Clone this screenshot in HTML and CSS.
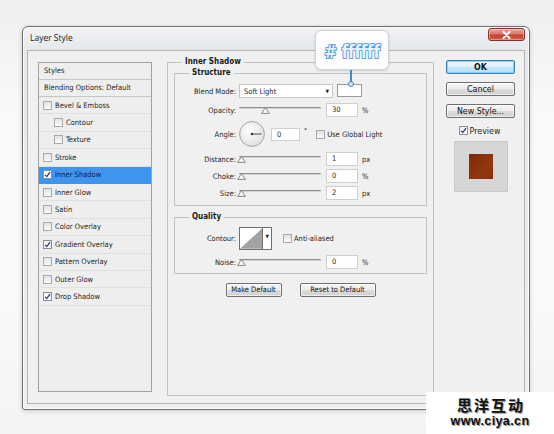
FILE: index.html
```html
<!DOCTYPE html>
<html>
<head>
<meta charset="utf-8">
<title>Layer Style</title>
<link rel="stylesheet" href="styles.css">
</head>
<body>
<div class="dialog">
  <div class="titlebar">
    <span class="title">Layer Style</span>
    <span class="close"><svg width="9" height="8" viewBox="0 0 9 8"><path d="M1.5 1 L7.5 7 M7.5 1 L1.5 7" stroke="#fff" stroke-width="2" stroke-linecap="round"/></svg></span>
  </div>
  <div class="frame">
    <div class="styles">
      <div class="hdr">Styles</div>
      <div class="hdr blend">Blending Options: Default</div>
      <div class="item"><span class="cb"></span>Bevel &amp; Emboss</div>
      <div class="item sub"><span class="cb"></span>Contour</div>
      <div class="item sub"><span class="cb"></span>Texture</div>
      <div class="item"><span class="cb"></span>Stroke</div>
      <div class="item sel"><span class="cb on"><svg width="7" height="7" viewBox="0 0 7 7"><path d="M1 3.8 L2.8 5.6 L6 1.2" fill="none" stroke="#23357a" stroke-width="1.2"/></svg></span>Inner Shadow</div>
      <div class="item"><span class="cb"></span>Inner Glow</div>
      <div class="item"><span class="cb"></span>Satin</div>
      <div class="item"><span class="cb"></span>Color Overlay</div>
      <div class="item"><span class="cb on"><svg width="7" height="7" viewBox="0 0 7 7"><path d="M1 3.8 L2.8 5.6 L6 1.2" fill="none" stroke="#23357a" stroke-width="1.2"/></svg></span>Gradient Overlay</div>
      <div class="item"><span class="cb"></span>Pattern Overlay</div>
      <div class="item"><span class="cb"></span>Outer Glow</div>
      <div class="item"><span class="cb on"><svg width="7" height="7" viewBox="0 0 7 7"><path d="M1 3.8 L2.8 5.6 L6 1.2" fill="none" stroke="#23357a" stroke-width="1.2"/></svg></span>Drop Shadow</div>
    </div>

    <fieldset class="main">
      <legend>Inner Shadow</legend>
      <fieldset class="group structure">
        <legend>Structure</legend>
        <div class="row r-blend">
          <span class="lbl">Blend Mode:</span>
          <div class="select"><span>Soft Light</span><span class="arrow">&#9660;</span></div>
          <div class="swatch"></div>
        </div>
        <div class="row r-opacity">
          <span class="lbl">Opacity:</span>
          <div class="slider"><div class="track"></div><svg class="thumb t-30" width="9" height="7" viewBox="0 0 9 7"><path d="M4.5 0.6 L8.4 6.4 L0.6 6.4 Z" fill="#f7f7f7" stroke="#7a7a7a" stroke-width="0.9"/></svg></div>
          <div class="num">30</div>
          <span class="unit">%</span>
        </div>
        <div class="row r-angle">
          <span class="lbl">Angle:</span>
          <svg class="dial" width="26" height="26" viewBox="0 0 26 26">
            <defs><radialGradient id="dg" cx="0.4" cy="0.35" r="0.7"><stop offset="0" stop-color="#ffffff"/><stop offset="1" stop-color="#dedede"/></radialGradient></defs>
            <circle cx="13" cy="13" r="12.4" fill="url(#dg)" stroke="#9c9c9c" stroke-width="0.9"/>
            <line x1="13" y1="13" x2="22.5" y2="13" stroke="#3a3a3a" stroke-width="0.9"/>
            <circle cx="13" cy="13" r="1.3" fill="#3a3a3a"/>
          </svg>
          <div class="num angle">0</div>
          <span class="deg">&#176;</span>
          <span class="cb cb-q"></span>
          <span class="cbtext">Use Global Light</span>
        </div>
        <div class="row r-dist">
          <span class="lbl">Distance:</span>
          <div class="slider"><div class="track"></div><svg class="thumb t-0" width="9" height="7" viewBox="0 0 9 7"><path d="M4.5 0.6 L8.4 6.4 L0.6 6.4 Z" fill="#f7f7f7" stroke="#7a7a7a" stroke-width="0.9"/></svg></div>
          <div class="num">1</div>
          <span class="unit">px</span>
        </div>
        <div class="row r-tight">
          <span class="lbl">Choke:</span>
          <div class="slider"><div class="track"></div><svg class="thumb t-0" width="9" height="7" viewBox="0 0 9 7"><path d="M4.5 0.6 L8.4 6.4 L0.6 6.4 Z" fill="#f7f7f7" stroke="#7a7a7a" stroke-width="0.9"/></svg></div>
          <div class="num">0</div>
          <span class="unit">%</span>
        </div>
        <div class="row r-tight">
          <span class="lbl">Size:</span>
          <div class="slider"><div class="track"></div><svg class="thumb t-0" width="9" height="7" viewBox="0 0 9 7"><path d="M4.5 0.6 L8.4 6.4 L0.6 6.4 Z" fill="#f7f7f7" stroke="#7a7a7a" stroke-width="0.9"/></svg></div>
          <div class="num">2</div>
          <span class="unit">px</span>
        </div>
      </fieldset>

      <fieldset class="group quality">
        <legend>Quality</legend>
        <div class="row r-contour">
          <span class="lbl">Contour:</span>
          <div class="contour">
            <svg width="23" height="21" viewBox="0 0 23 21"><rect x="0" y="0" width="23" height="21" fill="#ffffff"/><path d="M0 21 L23 0 L23 21 Z" fill="#a3a3a3"/></svg>
            <span class="carrow">&#9660;</span>
          </div>
          <span class="cb cb-q"></span>
          <span class="cbtext">Anti-aliased</span>
        </div>
        <div class="row r-noise">
          <span class="lbl">Noise:</span>
          <div class="slider"><div class="track"></div><svg class="thumb t-0" width="9" height="7" viewBox="0 0 9 7"><path d="M4.5 0.6 L8.4 6.4 L0.6 6.4 Z" fill="#f7f7f7" stroke="#7a7a7a" stroke-width="0.9"/></svg></div>
          <div class="num">0</div>
          <span class="unit">%</span>
        </div>
      </fieldset>

      <div class="btnrow">
        <button class="btn small w-make">Make Default</button>
        <button class="btn small w-reset">Reset to Default</button>
      </div>
    </fieldset>

    <div class="side">
      <button class="btn big ok">OK</button>
      <button class="btn big">Cancel</button>
      <button class="btn big">New Style...</button>
      <div class="preview-row"><span class="cb on"><svg width="7" height="7" viewBox="0 0 7 7"><path d="M1 3.8 L2.8 5.6 L6 1.2" fill="none" stroke="#23357a" stroke-width="1.2"/></svg></span><span class="ptext">Preview</span></div>
      <div class="preview"><div class="swatch-brown"></div></div>
    </div>
  </div>
</div>

<div class="tip"><span class="tiptext"># ffffff</span></div>
<div class="pin"><div class="pinline"></div><div class="pinhead"></div></div>

<div class="watermark">
  <div class="wm-cn">思洋互动</div>
  <div class="wm-url">www.ciya.cn</div>
</div>
</body>
</html>
```
FILE: styles.css
```css
* { box-sizing: border-box; }
html, body { margin: 0; padding: 0; }
body {
  width: 554px;
  height: 434px;
  overflow: hidden;
  position: relative;
  background: linear-gradient(180deg, #efefef 0%, #f9f9f9 25%, #fbfbfb 60%, #f4f4f4 100%);
  font-family: "DejaVu Sans Condensed", "DejaVu Sans", sans-serif;
  font-size: 7.5px;
  color: #1f1f1f;
}

.dialog {
  margin: 26px 0 0 22px;
  width: 508px;
  height: 384px;
  border: 1px solid #6e6e6e;
  border-radius: 6px 6px 3px 3px;
  background: linear-gradient(180deg, #f1f3f5 0%, #e6e9ec 22px, #eceef0 100%);
  padding: 0 4px 5px 4px;
  display: flex;
  flex-direction: column;
  box-shadow: 0 1px 5px rgba(0,0,0,0.18), inset 0 0 0 1px rgba(255,255,255,0.8);
}
.titlebar {
  height: 23px;
  display: flex;
  justify-content: space-between;
  align-items: flex-start;
  flex-shrink: 0;
}
.title {
  font-family: "Open Sans", sans-serif;
  font-size: 8.5px;
  line-height: 12px;
  margin: 5px 0 0 3px;
  color: #1a1a1a;
}
.close {
  width: 37px;
  height: 13px;
  margin-top: 1px;
  border: 1px solid #8d3026;
  border-radius: 3px;
  background: linear-gradient(180deg, #e9a79e 0%, #d7776a 45%, #c4412f 55%, #d1604c 100%);
  display: flex;
  align-items: center;
  justify-content: center;
  box-shadow: inset 0 0 0 1px rgba(255,255,255,0.35);
}

.frame {
  flex: 1;
  border: 1px solid #b4b4b4;
  background: #f0f0f0;
  display: flex;
  align-items: flex-start;
  padding: 6px 0 0 10px;
}

/* Styles list */
.styles {
  margin-top: 5px;
  width: 114px;
  height: 330px;
  border: 1px solid #a2a2a2;
  background: #eeeeee;
  flex-shrink: 0;
}
.hdr {
  height: 17px;
  border-bottom: 1px solid #c6c6c6;
  padding: 0 0 2px 5px;
  display: flex;
  align-items: center;
}
.hdr.blend { height: 17px; padding-bottom: 1px; }
.item {
  height: 17.4px;
  border-bottom: 1px solid #e0e0e0;
  padding-left: 4px;
  display: flex;
  align-items: center;
}
.item.sub { padding-left: 15px; }
.item.sel { background: #3d95ee; border-bottom-color: #3d95ee; color: #152040; }
.cb {
  width: 9px;
  height: 9px;
  border: 1px solid #a9a9a9;
  background: linear-gradient(180deg, #e3e3e3, #fafafa);
  margin-right: 3px;
  display: inline-flex;
  align-items: center;
  justify-content: center;
  flex-shrink: 0;
}
.cb.on { background: linear-gradient(180deg, #f2f2f2, #ffffff); border-color: #8e8e8e; }

/* main fieldset */
fieldset { margin: 0; min-width: 0; }
.main {
  margin-left: 15px;
  width: 267px;
  height: 339px;
  border: 1px solid #c2c2c2;
  padding: 1px 6px 0 6px;
  flex-shrink: 0;
}
legend {
  font-weight: bold;
  font-size: 8px;
  line-height: 10px;
  padding: 0 3px;
  color: #1a1a1a;
}
.main > legend { margin-left: 8px; }
.group {
  border: 1px solid #c2c2c2;
  padding: 0;
}
.group > legend { margin-left: 14px; }
.structure { padding: 6px 0 5px 0; }
.quality { margin-top: 6px; padding: 5px 0 4px 0; }

.row { display: flex; align-items: center; height: 14px; }
.lbl { width: 61px; text-align: right; margin-right: 3px; flex-shrink: 0; }
.r-opacity { margin-top: 5px; }
.r-angle { margin-top: 4px; height: 26px; }
.r-dist { margin-top: 5px; }
.r-tight { margin-top: 3px; }
.r-contour { height: 23px; }
.r-noise { margin-top: 5px; }

.select {
  width: 94px;
  height: 14px;
  background: #fff;
  border: 1px solid #c6c6c6;
  display: flex;
  align-items: center;
  justify-content: space-between;
  padding: 0 3px 0 4px;
}
.arrow { font-size: 5px; color: #222; }
.swatch {
  width: 25px;
  height: 13px;
  margin-left: 4px;
  align-self: flex-start;
  background: #fff;
  border: 1px solid #9a9a9a;
}
.slider {
  position: relative;
  width: 82px;
  height: 14px;
  flex-shrink: 0;
}
.track {
  margin-top: 4px;
  height: 2px;
  background: linear-gradient(180deg, #8f8f8f 0, #8f8f8f 50%, #d4d4d4 50%);
  border-radius: 1px;
}
.thumb { position: absolute; top: 4px; }
.t-30 { left: 22px; }
.t-0 { left: -2px; }
.num {
  width: 32px;
  height: 14px;
  margin-left: 5px;
  background: #fff;
  border: 1px solid #cfcfcf;
  padding-left: 5px;
  line-height: 12px;
}
.num.angle { width: 29px; margin-left: 6px; height: 13px; line-height: 11px; }
.unit { margin-left: 4px; }
.deg { margin-left: 4px; align-self: flex-start; margin-top: 7px; font-size: 7px; line-height: 7px; }
.cb-q { margin-left: 9px; margin-right: 2px; }
.r-contour .cb-q { margin-left: 11px; }
.dial { display: block; flex-shrink: 0; }

.contour {
  display: flex;
  width: 33px;
  height: 23px;
  border: 1px solid #6f6f6f;
  background: #fff;
}
.contour svg { display: block; }
.carrow {
  width: 9px;
  border-left: 1px solid #6f6f6f;
  font-size: 5px;
  display: flex;
  align-items: flex-start;
  justify-content: center;
  padding-top: 5px;
}

.btnrow {
  display: flex;
  justify-content: center;
  gap: 18px;
  margin-top: 9px;
}
.btn {
  font-family: "DejaVu Sans Condensed", "DejaVu Sans", sans-serif;
  border: 1px solid #707070;
  border-radius: 2px;
  background: linear-gradient(180deg, #f6f6f6 0%, #ececec 48%, #dcdcdc 52%, #d0d0d0 100%);
  color: #111;
  padding: 0;
  height: 14px;
  line-height: 12px;
  box-shadow: inset 0 0 0 1px rgba(255,255,255,0.6);
}
.small { font-size: 7.5px; }
.w-make { width: 56px; }
.w-reset { width: 76px; }

.side {
  margin-left: 12px;
  margin-top: 3px;
  width: 69px;
  display: flex;
  flex-direction: column;
  align-items: center;
  flex-shrink: 0;
}
.big { width: 69px; font-size: 8.8px; margin-bottom: 8px; }
.ok {
  border-color: #3d7fb0;
  background: linear-gradient(180deg, #eef8fe 0%, #dcf1fc 48%, #c4e8fc 52%, #ade0f8 100%);
  box-shadow: inset 0 0 0 1px #8ad2f4;
  font-weight: bold;
}
.preview-row {
  display: flex;
  align-items: center;
  height: 9px;
  margin-left: -2px;
}
.preview-row .cb { margin-right: 2px; }
.ptext { font-size: 8.8px; }
.preview {
  margin-top: 6px;
  width: 54px;
  height: 51px;
  background: #d6d6d6;
  border: 1px solid #cacaca;
  display: flex;
  align-items: center;
  justify-content: center;
}
.swatch-brown {
  width: 24px;
  height: 25px;
  background: linear-gradient(135deg, #7e280a, #93360f 60%, #8a300c);
}

/* annotation overlay */
.tip {
  position: absolute;
  left: 315px;
  top: 30px;
  width: 74px;
  height: 40px;
  background: #fdfdfd;
  border: 1px solid #d2d2d2;
  border-radius: 6px;
  box-shadow: 0 1px 3px rgba(0,0,0,0.15);
  display: flex;
  align-items: center;
  justify-content: center;
}
.tiptext {
  font-family: "DejaVu Sans Condensed", "DejaVu Sans", sans-serif;
  font-weight: bold;
  font-size: 17px;
  letter-spacing: -0.3px;
  color: #e4f3ff;
  -webkit-text-stroke: 1.6px #3d8ede;
  paint-order: stroke fill;
  margin-top: 3px;
}
.pin {
  position: absolute;
  left: 347px;
  top: 70px;
  width: 7px;
  display: flex;
  flex-direction: column;
  align-items: center;
}
.pinline { width: 2px; height: 12px; background: #4a86bf; }
.pinhead {
  width: 6px;
  height: 6px;
  border: 1.5px solid #4a86bf;
  border-radius: 50%;
  background: #cfe6fb;
  margin-top: -1px;
}

.watermark {
  position: absolute;
  left: 426px;
  top: 392px;
  width: 128px;
  height: 42px;
  background: #ffffff;
  display: flex;
  flex-direction: column;
  align-items: center;
  padding-top: 5px;
}
.wm-cn {
  font-family: "Noto Sans CJK SC", sans-serif;
  font-weight: bold;
  font-size: 15px;
  line-height: 15px;
  letter-spacing: 2px;
  margin-left: 2px;
  color: #111;
  text-shadow: 1px 1px 0 #9a9a9a;
}
.wm-url {
  font-family: "Liberation Sans", sans-serif;
  font-weight: bold;
  font-size: 12.5px;
  line-height: 12px;
  letter-spacing: 0.4px;
  margin-top: 3px;
  color: #111;
  text-shadow: 1px 1px 0 #9a9a9a;
}
```
